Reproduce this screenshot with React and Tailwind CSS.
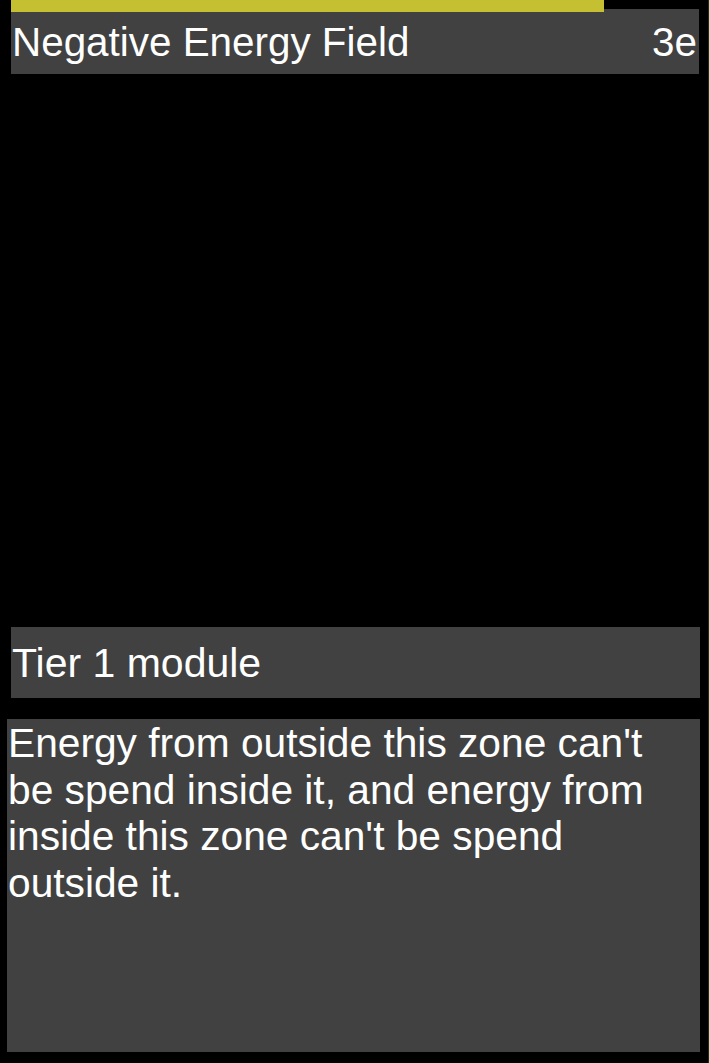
import React from 'react';

// Module card: title bar with charge bar, tier label, rules text
const card = {
  name: 'Negative Energy Field',
  cost: '3e',
  charge: 0.862,
  tier: 'Tier 1 module',
  text: "Energy from outside this zone can't be spend inside it, and energy from inside this zone can't be spend outside it.",
};

export default function App() {
  return (
    <div
      className="w-[709px] h-[1063px] bg-black text-white border-r border-[#0b3d0b] overflow-hidden"
      style={{ fontFamily: '"Liberation Sans", Arial, sans-serif' }}
    >
      <div className="pt-[9px] pl-[11px]">
        <div className="relative w-[688px] h-[65px] bg-[#414141] flex items-center justify-between pl-[1px] pr-[2px] pt-[2px] text-[40.4px]">
          <div
            className="absolute left-0 -top-[9px] h-[12px] bg-[#c4c031]"
            style={{ width: `${card.charge * 100}%` }}
          />
          <span>{card.name}</span>
          <span>{card.cost}</span>
        </div>
      </div>

      <div className="mt-[553px] ml-[11px] w-[689px] h-[71px] bg-[#414141] flex items-center pl-[1px] pt-[2px] text-[41px]">
        {card.tier}
      </div>

      <div className="mt-[21px] ml-[7px] w-[693px] h-[333px] bg-[#414141] pl-[1px] pr-[8px] pt-[1px] text-[40.7px] leading-[46.7px]">
        <p>{card.text}</p>
      </div>
    </div>
  );
}
